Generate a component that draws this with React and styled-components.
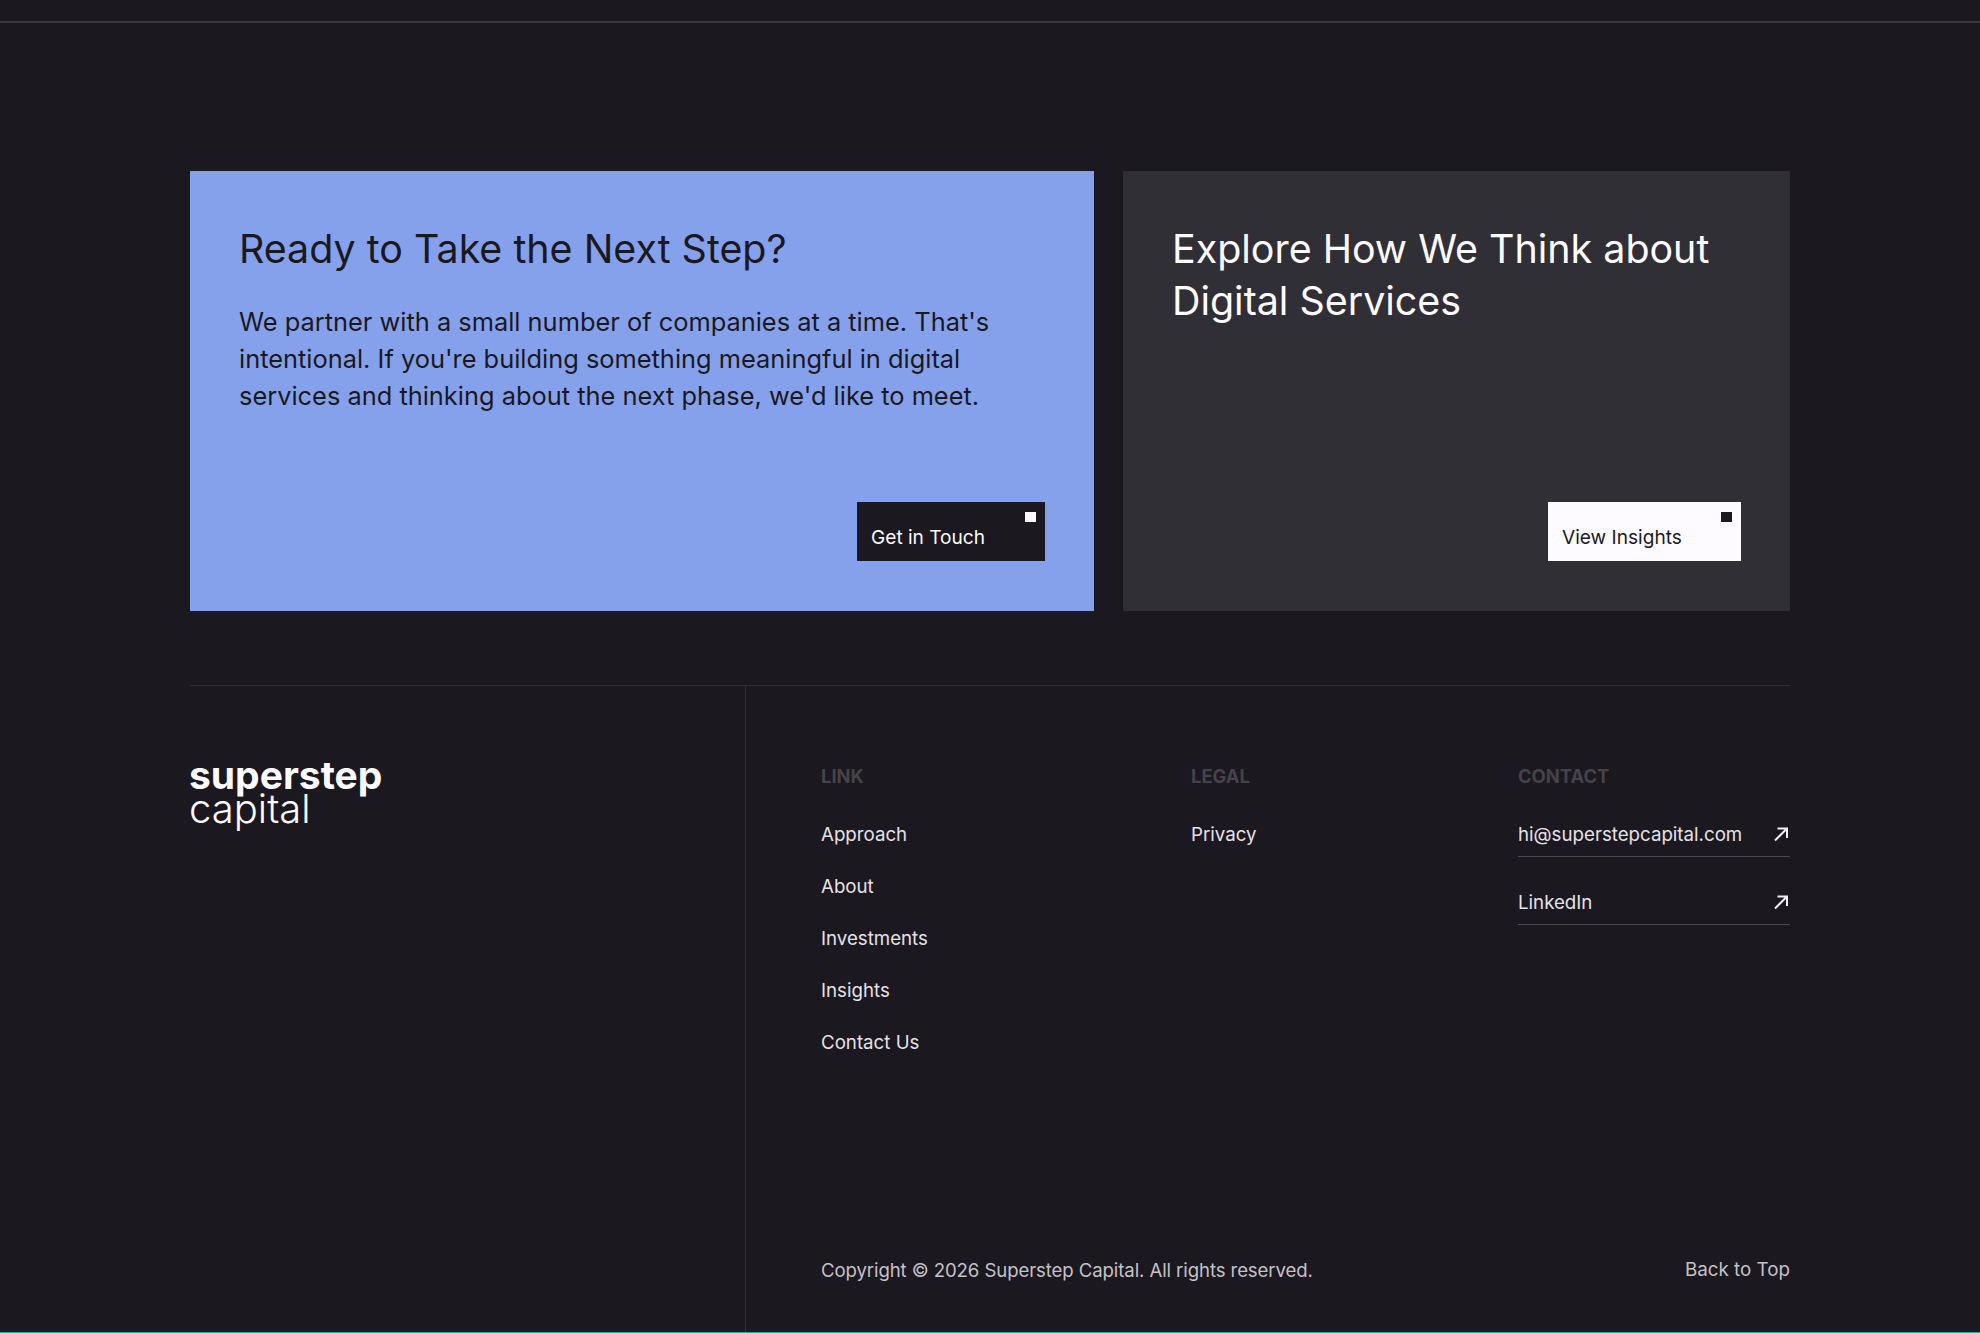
import React from 'react'
import styled, { createGlobalStyle } from 'styled-components'

const Global = createGlobalStyle`
    html, body {
        margin: 0;
        padding: 0;
        background: #1b181f;
    }
    * {
        box-sizing: border-box;
    }
`

const Page = styled.div`
    width: 1980px;
    height: 1333px;
    overflow: hidden;
    display: flex;
    flex-direction: column;
    background: #1b181f;
    font-family: Inter, 'Liberation Sans', sans-serif;
    padding-top: 21px;
    border-bottom: 1px solid #14b8a0;
`

const TopRule = styled.div`
    height: 2px;
    background: #3a383f;
`

const Cards = styled.section`
    display: flex;
    gap: 29px;
    margin: 148px 190px 0;
    height: 440px;
`

const Card = styled.div`
    width: ${(props) => props.$width}px;
    padding: 52px 49px 50px;
    display: flex;
    flex-direction: column;
    background: ${(props) => (props.$blue ? '#85a1eb' : '#312f36')};
    color: ${(props) => (props.$blue ? '#1b181f' : '#fdfbff')};
`

const CardTitle = styled.h2`
    margin: 0;
    font-size: 39.4px;
    line-height: 52px;
    font-weight: 400;
`

const CardText = styled.p`
    margin: 28px 0 0;
    max-width: 760px;
    font-size: 25.4px;
    line-height: 37px;
    font-weight: 400;
`

const ButtonRow = styled.div`
    margin-top: auto;
    display: flex;
    justify-content: flex-end;
`

const Button = styled.a`
    position: relative;
    width: ${(props) => props.$width}px;
    height: 59px;
    padding: 21px 14px 0;
    font-size: 19.1px;
    line-height: 28px;
    background: ${(props) => (props.$light ? '#fdfbff' : '#1b181f')};
    color: ${(props) => (props.$light ? '#1b181f' : '#fdfbff')};

    &::after {
        content: '';
        position: absolute;
        top: 10px;
        right: 9px;
        width: 11px;
        height: 10px;
        background: ${(props) => (props.$light ? '#1b181f' : '#fdfbff')};
    }
`

const Footer = styled.footer`
    flex: 1;
    margin: 74px 190px 0;
    display: flex;
    border-top: 1px solid #312f36;
`

const Brand = styled.div`
    width: 556px;
    padding-top: 72px;
    border-right: 1px solid #312f36;
    color: #fdfbff;
`

const LogoTop = styled.div`
    margin-left: -1px;
    font-size: 39px;
    line-height: 33px;
    font-weight: 700;
`

const LogoBottom = styled.div`
    margin-left: -1px;
    font-size: 40px;
    line-height: 35px;
    font-weight: 300;
`

const FooterMain = styled.div`
    flex: 1;
    padding: 77px 0 0 75px;
    display: flex;
    flex-direction: column;
`

const Columns = styled.div`
    flex: 1;
    display: grid;
    grid-template-columns: 370px 327px 272px;
`

const ColumnTitle = styled.div`
    font-size: 18.4px;
    line-height: 26px;
    font-weight: 700;
    color: #45434a;
    margin-bottom: 33px;
`

const FooterLink = styled.a`
    display: block;
    font-size: 18.7px;
    line-height: 26px;
    color: #e4e2e8;
    margin-bottom: 26px;
`

const ContactRow = styled.a`
    height: 35px;
    display: flex;
    justify-content: space-between;
    font-size: 18.7px;
    line-height: 26px;
    color: #e4e2e8;
    border-bottom: 1px solid #4a484f;
    margin-bottom: 33px;
`

const Arrow = styled.svg`
    width: 16px;
    height: 16px;
    margin: 4px 1px 0 0;
    fill: none;
    stroke: #f0eef4;
    stroke-width: 2;
`

const BottomRow = styled.div`
    display: flex;
    justify-content: space-between;
    line-height: 26px;
    color: #c4c2c8;
    padding-bottom: 49px;
`

const Copyright = styled.span`
    font-size: 18.6px;
    letter-spacing: -0.1px;
`

const BackToTop = styled.a`
    font-size: 18.8px;
`

const ArrowIcon = () => (
    <Arrow viewBox="0 0 16 16">
        <path d="M2 14.5 13.5 3M4.5 2.5h9.5V12" />
    </Arrow>
)

const LINKS = ['Approach', 'About', 'Investments', 'Insights', 'Contact Us']

const App = () => {
    return (
        <Page>
            <Global />
            <TopRule />
            <Cards>
                <Card $blue $width={904}>
                    <CardTitle>Ready to Take the Next Step?</CardTitle>
                    <CardText>
                        We partner with a small number of companies at a time.
                        That's intentional. If you're building something
                        meaningful in digital services and thinking about the
                        next phase, we'd like to meet.
                    </CardText>
                    <ButtonRow>
                        <Button $width={188}>Get in Touch</Button>
                    </ButtonRow>
                </Card>
                <Card $width={667}>
                    <CardTitle>
                        Explore How We Think about Digital Services
                    </CardTitle>
                    <ButtonRow>
                        <Button $light $width={193}>
                            View Insights
                        </Button>
                    </ButtonRow>
                </Card>
            </Cards>
            <Footer>
                <Brand>
                    <LogoTop>superstep</LogoTop>
                    <LogoBottom>capital</LogoBottom>
                </Brand>
                <FooterMain>
                    <Columns>
                        <div>
                            <ColumnTitle>LINK</ColumnTitle>
                            {LINKS.map((link) => (
                                <FooterLink key={link}>{link}</FooterLink>
                            ))}
                        </div>
                        <div>
                            <ColumnTitle>LEGAL</ColumnTitle>
                            <FooterLink>Privacy</FooterLink>
                        </div>
                        <div>
                            <ColumnTitle>CONTACT</ColumnTitle>
                            <ContactRow>
                                hi@superstepcapital.com
                                <ArrowIcon />
                            </ContactRow>
                            <ContactRow>
                                LinkedIn
                                <ArrowIcon />
                            </ContactRow>
                        </div>
                    </Columns>
                    <BottomRow>
                        <Copyright>
                            Copyright © 2026 Superstep Capital. All rights
                            reserved.
                        </Copyright>
                        <BackToTop>Back to Top</BackToTop>
                    </BottomRow>
                </FooterMain>
            </Footer>
        </Page>
    )
}

export default App
